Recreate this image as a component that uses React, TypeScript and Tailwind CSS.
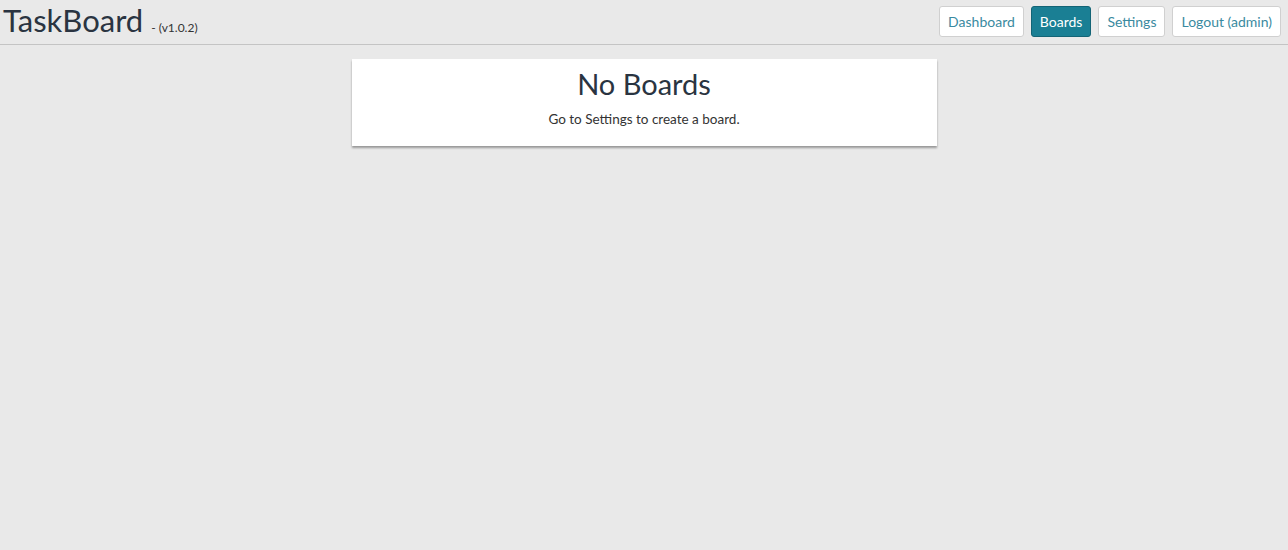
import React from "react";

const navItems = [
  { label: "Dashboard", active: false },
  { label: "Boards", active: true },
  { label: "Settings", active: false },
  { label: "Logout (admin)", active: false },
];

const App: React.FC = () => {
  return (
    <div
      className="min-h-[550px] w-full bg-[#e9e9e9] text-[#2c3e50]"
      style={{ fontFamily: "Lato, 'Open Sans', sans-serif" }}
    >
      <header className="flex h-[45px] items-start justify-between border-b border-[#c4c4c4] pl-[3px] pr-[7px]">
        <h1 className="mt-[5px] flex items-baseline gap-[8px] text-[31px] leading-[30px] text-[#2a3441]">
          TaskBoard
          <span className="text-[12px] text-[#333]">- (v1.0.2)</span>
        </h1>
        <nav className="mt-[6px] flex gap-[7px]">
          {navItems.map((item) => (
            <button
              key={item.label}
              className={
                item.active
                  ? "h-[31px] rounded-[3px] border border-[#136476] bg-[#1a7f94] px-[8px] text-[14px] text-white"
                  : "h-[31px] rounded-[3px] border border-[#d0d0d0] bg-white px-[8px] text-[14px] text-[#3a8aa0]"
              }
            >
              {item.label}
            </button>
          ))}
        </nav>
      </header>

      <main className="flex justify-center pt-[14px]">
        <section className="flex h-[87px] w-[585px] flex-col items-center bg-white pt-[8px] shadow-[0_2px_2px_rgba(0,0,0,0.35)]">
          <h2 className="text-[29px] leading-[34px] text-[#2a3441]">No Boards</h2>
          <p className="mt-[8px] text-[13.5px] text-[#333]">
            Go to Settings to create a board.
          </p>
        </section>
      </main>
    </div>
  );
};

export default App;
